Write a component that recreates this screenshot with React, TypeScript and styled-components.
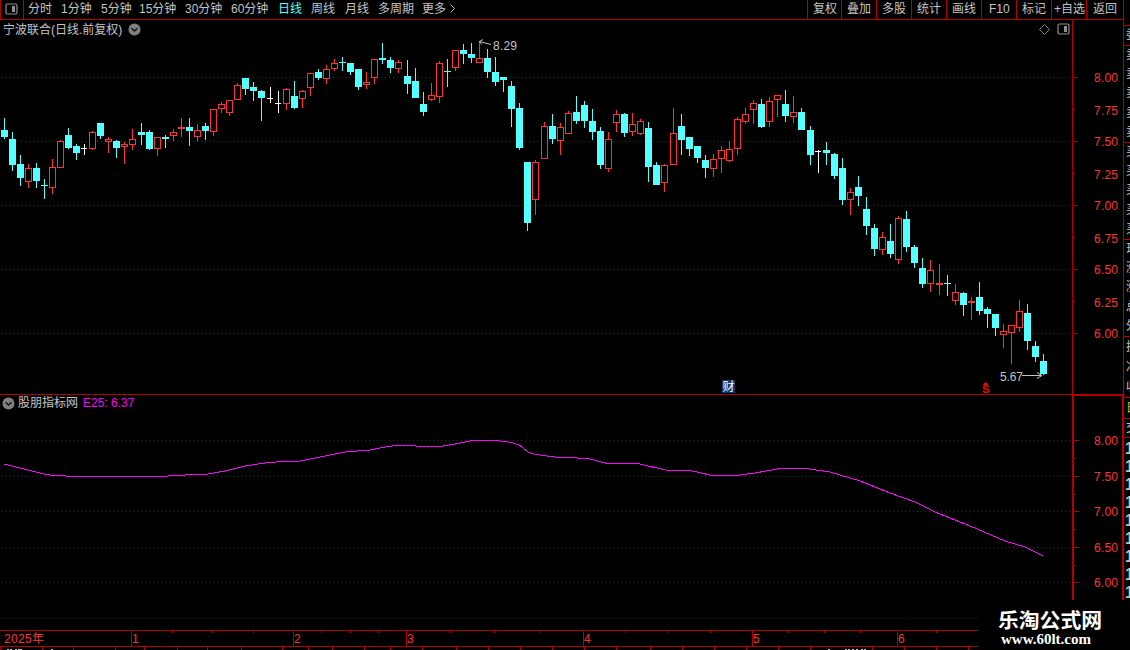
import React from "react";
import styled, { createGlobalStyle } from "styled-components";

const RED = "#b40000";
const UP = "#ff3232";
const DOWN = "#54ffff";
const GREY = "#c4c4c4";
const FONT = '"Liberation Sans", "Noto Sans CJK SC", sans-serif';

const GlobalStyle = createGlobalStyle`
  * { box-sizing: border-box; }
  body { margin: 0; background: #000; overflow: hidden; }
  svg { display: block; }
`;

const Screen = styled.div`
  position: relative;
  display: flex;
  width: 1130px;
  height: 650px;
  overflow: hidden;
  background: #000;
  color: ${GREY};
  font: 12px/18px ${FONT};
  white-space: nowrap;
`;

const Main = styled.main`
  display: flex;
  flex-direction: column;
  width: 1123px;
  flex: none;
`;

const TopBar = styled.header`
  display: flex;
  height: 20px;
  border-bottom: 1px solid ${RED};
  line-height: 19px;
`;

const LayoutButton = styled.div`
  display: flex;
  align-items: center;
  width: 24px;
  padding: 0 0 2px 4px;
  border: solid ${RED};
  border-width: 0 1px;
`;

const Periods = styled.nav`
  display: grid;
  grid-template-columns: 33px 40px 38px 46px 46px 47px 33px 34px 33px 44px 27px 12px;
  padding-left: 4px;
  width: 783px;
`;

const Period = styled.span<{ $active?: boolean }>`
  color: ${(p) => (p.$active ? DOWN : GREY)};
`;

const Actions = styled.div`
  display: grid;
  grid-template-columns: 34px repeat(8, 35px) 2px;
`;

const Action = styled.span<{ $indent: number }>`
  border-left: 1px solid ${RED};
  padding-left: ${(p) => p.$indent}px;
`;

const Row = styled.div`
  display: flex;
`;

const Pane = styled.section<{ $height: number }>`
  display: flex;
  flex-direction: column;
  width: 1072px;
  height: ${(p) => p.$height}px;
`;

const PaneHeader = styled.div<{ $height: number; $left: number }>`
  display: flex;
  align-items: center;
  height: ${(p) => p.$height}px;
  padding-left: ${(p) => p.$left}px;
`;

const Title = styled.span`
  padding-top: 1px;
  margin-right: 5.5px;
`;

const Indicator = styled.span`
  margin: 0 5px 0 3px;
`;

const Reading = styled.span`
  color: #ff00ff;
`;

const HeaderTools = styled.div`
  display: flex;
  align-items: center;
  gap: 7px;
  margin-left: auto;
  padding-right: 2px;
`;

const Axis = styled.aside<{ $thick?: boolean }>`
  width: 51px;
  border: solid ${RED};
  border-width: ${(p) => (p.$thick ? "2px 1px 0 2px" : "0 0 0 1px")};
`;

const TimeAxis = styled.footer`
  width: 978px;
  height: 20px;
`;

const Side = styled.aside`
  width: 7px;
  height: 650px;
  border-left: 1px solid ${RED};
  overflow: hidden;
`;

const SideGroup = styled.div<{ $height: number; $color?: string; $shift?: number }>`
  display: flex;
  flex-direction: column;
  justify-content: space-around;
  height: ${(p) => p.$height}px;
  border-bottom: 1px solid ${RED};
  color: ${(p) => p.$color ?? GREY};
  padding-left: ${(p) => p.$shift ?? 2}px;
  overflow: hidden;
  line-height: 17px;
`;

const SideDigits = styled.div`
  padding: 2px 0 0 1px;
  font-size: 16px;
  font-weight: bold;
  line-height: 18px;
`;

const SideDigit = styled.div`
  height: 18px;
`;

const Watermark = styled.div`
  position: absolute;
  left: 978px;
  top: 600px;
  width: 152px;
  height: 50px;
  padding: 8px 0 0 20px;
  background: #000;
  color: #fff;
`;

const WatermarkName = styled.div`
  font: bold 20.8px/22px "Noto Sans CJK SC", sans-serif;
`;

const WatermarkUrl = styled.div`
  padding-left: 3px;
  font: bold 15px/18px "Liberation Serif", serif;
`;

type Kind = "u" | "d" | "w";
type Candle = [number, number, number, number, number, Kind];

/* centre x, high, low, body top, body bottom, kind */
const candles: Candle[] = [
  [4,118,139,130,137,"d"],[12,132,171,139,165,"d"],[20,155,186,164,178,"d"],[28,164,188,168,182,"u"],
  [36,163,188,168,181,"d"],[44,179,199,185,186,"d"],[52,159,194,167,188,"u"],[60,140,168,141,168,"u"],
  [68,128,149,135,148,"d"],[76,144,160,146,153,"d"],[84,144,155,148,149,"w"],[92,131,150,132,149,"u"],
  [100,123,139,123,136,"d"],[108,137,153,139,142,"u"],[116,140,158,141,148,"d"],[124,142,164,144,147,"u"],
  [132,129,150,139,145,"u"],[141,123,145,132,135,"d"],[149,130,150,132,149,"d"],[157,137,156,137,149,"u"],
  [165,135,148,137,139,"d"],[173,129,141,132,136,"u"],[181,118,137,127,129,"u"],[189,118,146,127,131,"d"],
  [197,124,141,130,137,"u"],[205,123,140,126,131,"d"],[213,109,136,109,132,"u"],[221,102,113,104,109,"u"],
  [229,100,116,100,113,"u"],[237,83,100,85,100,"u"],[245,78,95,78,89,"d"],[253,82,101,87,91,"d"],
  [261,90,121,91,98,"d"],[270,87,103,98,99,"w"],[278,91,113,103,104,"w"],[286,88,110,89,104,"u"],
  [294,81,109,96,108,"d"],[302,90,108,91,99,"u"],[310,73,96,73,88,"u"],[318,69,80,72,78,"d"],
  [326,65,84,69,79,"u"],[334,59,71,63,69,"u"],[342,57,71,62,63,"d"],[350,63,75,63,72,"d"],
  [358,69,90,69,87,"d"],[366,72,89,82,85,"u"],[374,59,84,59,78,"u"],[382,43,64,58,60,"d"],
  [390,57,73,60,68,"d"],[398,60,73,62,69,"u"],[407,60,94,76,84,"d"],[415,68,98,81,98,"d"],
  [423,92,116,104,112,"d"],[431,83,101,95,100,"u"],[439,61,103,63,97,"u"],[447,59,87,71,72,"d"],
  [455,50,71,50,68,"u"],[463,44,64,50,54,"d"],[471,43,63,54,58,"d"],[479,41,63,58,63,"u"],
  [487,49,78,58,72,"d"],[495,57,86,72,82,"d"],[503,77,92,77,80,"d"],[511,81,127,86,109,"d"],
  [519,103,150,108,148,"d"],[527,162,231,162,223,"d"],[535,160,215,162,200,"u"],[544,122,159,126,159,"u"],
  [552,114,144,126,139,"d"],[560,123,155,127,141,"u"],[568,111,134,113,134,"u"],[576,96,124,112,121,"d"],
  [584,101,128,105,121,"d"],[592,109,140,121,132,"d"],[600,127,169,131,165,"d"],[608,132,172,139,169,"u"],
  [616,110,132,114,123,"u"],[624,113,137,114,133,"d"],[632,113,136,124,132,"u"],[640,119,135,121,134,"u"],
  [648,122,182,128,167,"d"],[656,162,185,165,185,"d"],[664,164,192,165,183,"u"],[673,108,165,133,165,"u"],
  [681,114,155,126,140,"d"],[689,137,156,137,149,"d"],[697,146,163,146,158,"d"],[705,155,178,160,168,"d"],
  [713,154,177,159,169,"u"],[721,146,173,150,159,"u"],[729,141,162,149,161,"u"],[737,117,155,119,149,"u"],
  [745,108,124,114,122,"u"],[753,100,124,103,110,"u"],[761,99,128,104,127,"d"],[769,97,127,101,122,"u"],
  [777,95,117,95,100,"u"],[785,90,122,104,116,"d"],[793,96,123,112,117,"u"],[801,108,130,112,130,"d"],
  [810,126,165,130,155,"d"],[818,150,173,151,152,"w"],[826,142,165,150,153,"d"],[834,153,179,154,176,"d"],
  [842,158,205,168,200,"d"],[850,188,215,192,200,"u"],[858,176,206,187,196,"d"],[866,197,235,209,226,"d"],
  [874,224,256,228,249,"d"],[882,232,255,237,250,"u"],[890,224,258,241,254,"d"],[898,216,264,218,260,"u"],
  [906,211,252,219,247,"d"],[914,245,268,247,263,"d"],[922,258,288,268,284,"d"],[930,260,292,270,284,"u"],
  [939,264,295,283,285,"u"],[947,275,296,283,284,"d"],[955,284,305,292,301,"u"],[963,292,316,293,305,"d"],
  [971,297,320,301,303,"u"],[979,282,315,297,311,"d"],[987,307,328,309,314,"d"],[995,314,336,314,328,"d"],
  [1003,324,348,331,335,"u"],[1011,325,364,325,333,"u"],[1019,300,332,311,328,"u"],[1027,304,350,313,341,"d"],
  [1035,341,362,346,357,"d"],[1043,354,375,361,374,"d"],
];

const average =
  "4,464 12,466 20,468 28,470 36,472 44,474 50,475 65,475.5 66,476 168,476 185,475 208,474 225,471 245,466 265,463 282,461.5 300,461 320,457 345,452 370,450 385,447 400,445 412,445.5 425,447 440,446.5 455,444 470,441 488,440.5 500,441 512,442.5 520,445.5 528,452 536,454.5 555,457 588,458.5 605,463 640,464 665,470 690,470.5 710,475 740,475 755,473 780,468.5 805,468.5 830,472 860,481 890,493 915,502 935,512 970,526 1005,541 1025,547 1043,556";

function CandleMark({ c }: { c: Candle }) {
  const [x, high, low, top, bottom, kind] = c;
  const color = kind === "u" ? UP : kind === "d" ? DOWN : "#fff";
  const h = bottom - top;
  return (
    <g fill={color}>
      <rect x={x} y={high} width={1} height={low - high} />
      <rect x={x - 3} y={top} width={kind === "w" ? 6 : 7} height={h} />
      {kind === "u" && h > 2 && <rect x={x - 2} y={top + 1} width={5} height={h - 2} fill="#000" />}
    </g>
  );
}

function GridLine({ y, color }: { y: number; color: string }) {
  return <line x1={1} x2={1072} y1={y + 0.5} y2={y + 0.5} stroke={color} strokeDasharray="1 3" />;
}

function PanelIcon() {
  return (
    <svg width={13} height={12} viewBox="0 0 13 12">
      <rect x={1} y={1} width={11} height={10} rx={1.5} fill="none" stroke="#909090" strokeWidth={1.2} />
      <rect x={7} y={3} width={3} height={6} fill="#909090" />
    </svg>
  );
}

function ChevronBadge() {
  return (
    <svg width={13} height={13} viewBox="0 0 13 13">
      <circle cx={6.5} cy={6.5} r={6} fill="#808080" />
      <path d="M3.5 5.2L6.5 8L9.5 5.2" fill="none" stroke="#111" strokeWidth={1.4} />
    </svg>
  );
}

function AxisScale({ height, labels, major, minor, offset }: {
  height: number; labels: [string, number][]; major: number[]; minor: number[]; offset: number;
}) {
  return (
    <svg width={46} height={height}>
      {major.map((y) => <rect key={y} x={0} y={y} width={5} height={1} fill={RED} />)}
      {minor.map((y) => <rect key={y} x={0} y={y} width={2} height={1} fill={RED} />)}
      {labels.map(([t, y]) => (
        <text key={y} x={offset} y={y} fill={UP} fontSize={12} textLength={24} fontFamily={FONT}>{t}</text>
      ))}
    </svg>
  );
}

const periods = ["分时", "1分钟", "5分钟", "15分钟", "30分钟", "60分钟", "日线", "周线", "月线", "多周期", "更多"];
const actions: [string, number][] = [
  ["复权", 5], ["叠加", 5], ["多股", 5], ["统计", 5], ["画线", 5], ["F10", 7], ["标记", 5], ["+自选", 2], ["返回", 6],
];
const months: [number, string][] = [[131, "1"], [293, "2"], [406, "3"], [583, "4"], [752, "5"], [897, "6"]];
const weekTicks = [172, 212, 253, 321, 350, 378, 450, 494, 539, 625, 667, 710, 788, 824, 860, 936];
const lowerTicks = [
  0, 42, 73, 115, 144, 177, 207, 241, 282, 308, 332, 364, 390, 422,
  456, 488, 520, 552, 584, 616, 650, 682, 714, 746, 778, 810, 872, 904, 936, 968,
];
const statusMarks = [7, 10, 15, 18, 20, 51, 828, 845, 848, 852, 856, 861, 864];

export default function App() {
  return (
    <Screen>
      <GlobalStyle />
      <Main>
        <TopBar>
          <LayoutButton><PanelIcon /></LayoutButton>
          <Periods>
            {periods.map((p) => <Period key={p} $active={p === "日线"}>{p}</Period>)}
            <svg width={8} height={18}><path d="M1.5 4.5L5.5 8.5L1.5 12.5" fill="none" stroke={GREY} /></svg>
          </Periods>
          <Actions>
            {actions.map(([label, indent]) => <Action key={label} $indent={indent}>{label}</Action>)}
          </Actions>
        </TopBar>

        <Row>
          <Pane $height={374}>
            <PaneHeader $height={18} $left={3}>
              <Title>宁波联合(日线.前复权)</Title>
              <ChevronBadge />
              <HeaderTools>
                <svg width={11} height={11}><path d="M5.5 .5L10.5 5.5L5.5 10.5L.5 5.5Z" fill="none" stroke="#808080" /></svg>
                <PanelIcon />
              </HeaderTools>
            </PaneHeader>
            <svg width={1072} height={356} viewBox="0 38 1072 356" shapeRendering="crispEdges">
              {[77, 141, 205, 269, 333].map((y) => <GridLine key={y} y={y} color="#801414" />)}
              {candles.map((c) => <CandleMark key={c[0]} c={c} />)}
              <g fill="none" stroke={GREY} shapeRendering="auto">
                <path d="M479.5 41.5L491 44.5M483 39.5L479.5 41.5L481.5 44.5" />
                <path d="M1022 375.5H1042M1037 372.5L1042 375.5L1037 378.5" />
              </g>
              <g fill={GREY} fontFamily={FONT} fontSize={12}>
                <text x={493} y={50} textLength={24}>8.29</text>
                <text x={1000} y={381} textLength={23}>5.67</text>
              </g>
              <rect x={722} y={380} width={13} height={13} fill="#0a3a78" />
              <text x={722.5} y={391} fontSize={12} fill="#fff" fontFamily={FONT}>财</text>
              <text x={982} y={393} fontSize={11} fontWeight="bold" fill="#f00" fontFamily={FONT}>S</text>
              <path d="M985.5 382L988 385H983Z" fill="#f00" />
            </svg>
          </Pane>
          <Axis>
            <AxisScale
              height={374}
              offset={21}
              major={[57, 121, 185, 249, 313]}
              minor={[89, 153, 217, 281]}
              labels={[["8.00", 62], ["7.75", 95], ["7.50", 126], ["7.25", 159], ["7.00", 190], ["6.75", 223], ["6.50", 254], ["6.25", 287], ["6.00", 318]]}
            />
          </Axis>
        </Row>

        <Row>
          <Pane $height={236}>
            <svg width={1072} height={1}><rect width={1072} height={1} fill={RED} /></svg>
            <PaneHeader $height={16} $left={2}>
              <ChevronBadge />
              <Indicator>股朋指标网</Indicator>
              <Reading>E25: 6.37</Reading>
            </PaneHeader>
            <svg width={1072} height={219} viewBox="0 411 1072 219" shapeRendering="crispEdges">
              {[440, 476, 511, 547, 582, 618].map((y) => <GridLine key={y} y={y} color="#a00000" />)}
              <polyline points={average} fill="none" stroke="#ff00ff" strokeWidth={1} />
            </svg>
          </Pane>
          <Axis $thick>
            <AxisScale
              height={234}
              offset={20}
              major={[44, 80, 115, 151, 186]}
              minor={[62, 98, 133, 169]}
              labels={[["8.00", 49], ["7.50", 85], ["7.00", 120], ["6.50", 156], ["6.00", 191]]}
            />
          </Axis>
        </Row>

        <TimeAxis>
          <svg width={978} height={20} shapeRendering="crispEdges">
            <g fill={RED}>
              <rect y={0} width={978} height={1} />
              <rect y={16} width={978} height={1} />
              {months.map(([x]) => <rect key={x} x={x} y={0} width={1} height={16} />)}
              {weekTicks.map((x) => <rect key={x} x={x} y={1} width={1} height={2} />)}
              {lowerTicks.map((x) => <rect key={x} x={x} y={17} width={1} height={3} />)}
            </g>
            <g fill={GREY}>
              {statusMarks.map((x) => <rect key={x} x={x} y={19} width={2} height={1} />)}
            </g>
            <g fill={UP} fontFamily={FONT} fontSize={12}>
              <text x={4} y={13} textLength={40}>2025年</text>
              {months.map(([x, m]) => <text key={x} x={x + 1} y={13}>{m}</text>)}
            </g>
          </svg>
        </TimeAxis>
      </Main>

      <Side>
        <SideGroup $height={26} />
        <SideGroup $height={20}>委</SideGroup>
        <SideGroup $height={97}>{["a", "b", "c", "d", "e"].map((k) => <span key={k}>卖</span>)}</SideGroup>
        <SideGroup $height={97}>{["a", "b", "c", "d", "e"].map((k) => <span key={k}>买</span>)}</SideGroup>
        <SideGroup $height={97}><span>现</span><span>涨</span><span>涨</span><span>总</span><span>外</span></SideGroup>
        <SideGroup $height={61}><span>换</span><span>净</span><span>收</span></SideGroup>
        <SideGroup $height={21} $color="#c8c800" $shift={2}>日</SideGroup>
        <SideGroup $height={19}>交</SideGroup>
        <SideDigits>
          {[0, 1, 2, 3, 4, 5, 6, 7, 8].map((k) => <SideDigit key={k}>1</SideDigit>)}
        </SideDigits>
      </Side>

      <Watermark>
        <WatermarkName>乐淘公式网</WatermarkName>
        <WatermarkUrl>www.60lt.com</WatermarkUrl>
      </Watermark>
    </Screen>
  );
}
